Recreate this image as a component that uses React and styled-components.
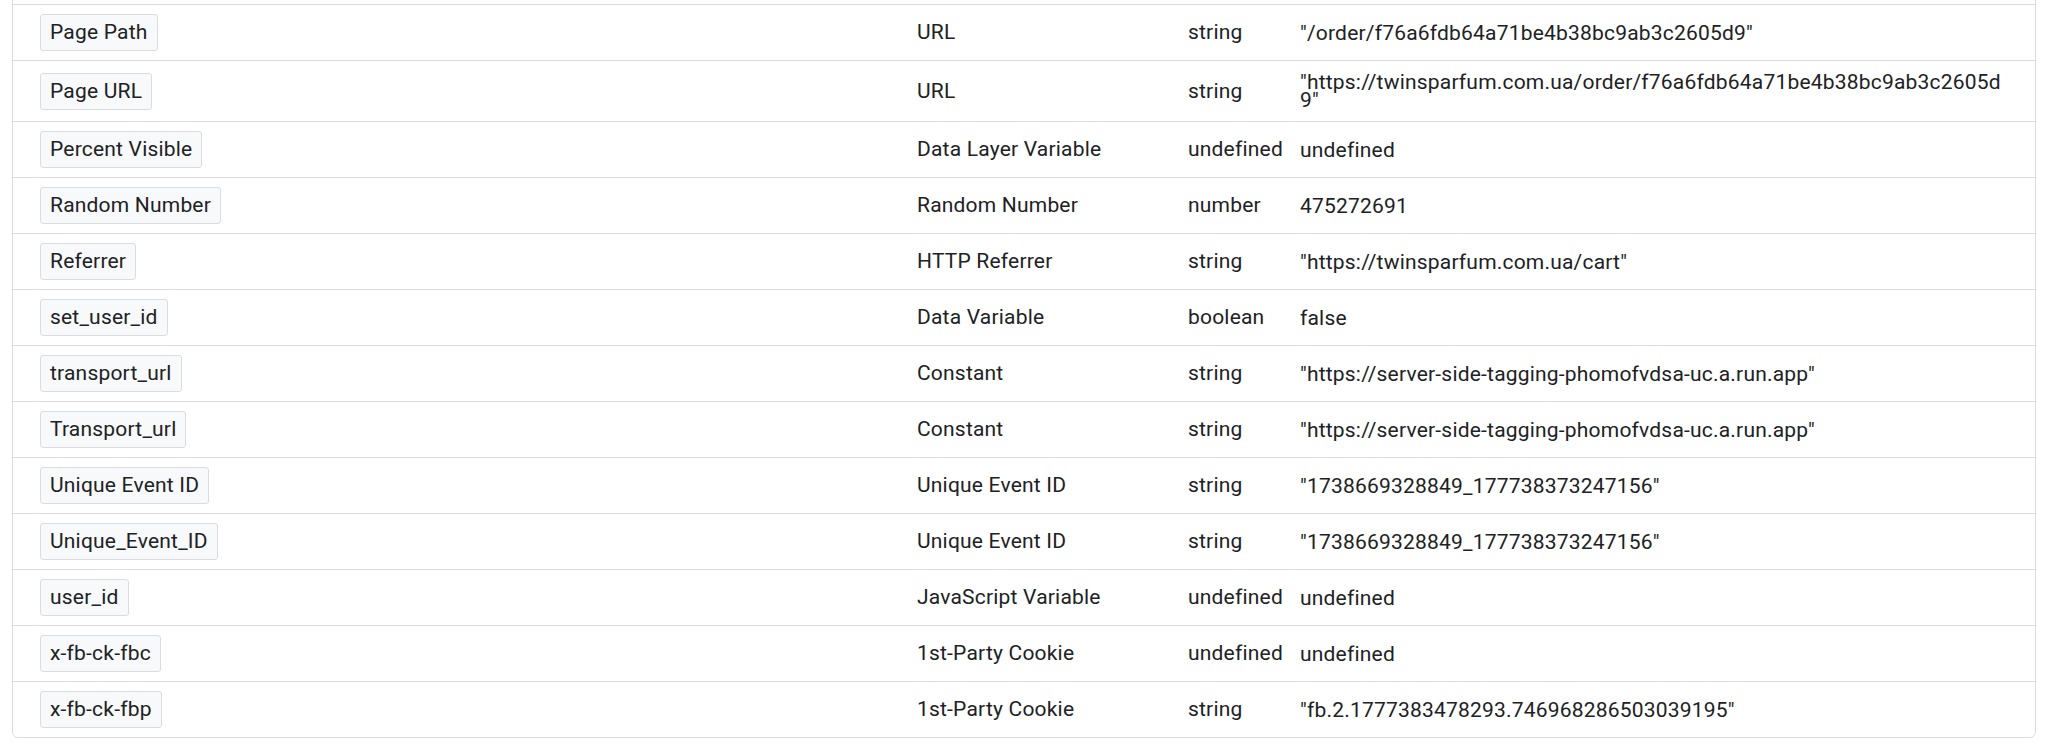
import React from 'react';
import styled, { createGlobalStyle } from 'styled-components';

const GlobalStyle = createGlobalStyle`
    html, body {
        margin: 0;
        padding: 0;
        background: #fff;
    }
    body {
        font-family: Roboto, "Noto Sans", Arial, sans-serif;
        color: #202124;
        letter-spacing: 0.2px;
    }
`;

const Viewport = styled.div`
    height: 756px;
    overflow: hidden;
    padding: 0 12px;
`;

const Panel = styled.div`
    margin-top: -52px;
    border: 1px solid #dadce0;
    border-radius: 6px;
    background: #fff;
`;

const Row = styled.div`
    display: grid;
    grid-template-columns: 892px 271px 112px 1fr;
    align-items: center;
    min-height: 55px;
    border-bottom: 1px solid #dadce0;

    &:last-child {
        border-bottom: none;
    }
`;

const NameCell = styled.div`
    padding: 9px 0 9px 27px;
`;

const Chip = styled.span`
    display: inline-block;
    padding: 5px 9px;
    font-size: 21px;
    line-height: 25px;
    color: #202124;
    background: #f8f9fa;
    border: 1px solid #dadce0;
    border-radius: 3px;
`;

const Cell = styled.div`
    padding: 0 4px 0 12px;
    font-size: 21px;
    line-height: 25px;
    white-space: nowrap;
`;

const ValueCell = styled.div`
    padding: 12px 29px 12px 12px;
    font-size: 21px;
    line-height: 18px;
    word-break: break-all;
`;

// first entry sits above the fold, the list is scrolled down a bit
const rows = [
    ['Page Hostname', 'URL', 'string', '"twinsparfum.com.ua"'],
    ['Page Path', 'URL', 'string', '"/order/f76a6fdb64a71be4b38bc9ab3c2605d9"'],
    ['Page URL', 'URL', 'string', '"https://twinsparfum.com.ua/order/f76a6fdb64a71be4b38bc9ab3c2605d9"'],
    ['Percent Visible', 'Data Layer Variable', 'undefined', 'undefined'],
    ['Random Number', 'Random Number', 'number', '475272691'],
    ['Referrer', 'HTTP Referrer', 'string', '"https://twinsparfum.com.ua/cart"'],
    ['set_user_id', 'Data Variable', 'boolean', 'false'],
    ['transport_url', 'Constant', 'string', '"https://server-side-tagging-phomofvdsa-uc.a.run.app"'],
    ['Transport_url', 'Constant', 'string', '"https://server-side-tagging-phomofvdsa-uc.a.run.app"'],
    ['Unique Event ID', 'Unique Event ID', 'string', '"1738669328849_177738373247156"'],
    ['Unique_Event_ID', 'Unique Event ID', 'string', '"1738669328849_177738373247156"'],
    ['user_id', 'JavaScript Variable', 'undefined', 'undefined'],
    ['x-fb-ck-fbc', '1st-Party Cookie', 'undefined', 'undefined'],
    ['x-fb-ck-fbp', '1st-Party Cookie', 'string', '"fb.2.1777383478293.746968286503039195"'],
];

const App = () => {
    return (
        <>
            <GlobalStyle />
            <Viewport>
                <Panel>
                    {rows.map(([name, varType, valueType, value]) => (
                        <Row key={name}>
                            <NameCell>
                                <Chip>{name}</Chip>
                            </NameCell>
                            <Cell>{varType}</Cell>
                            <Cell>{valueType}</Cell>
                            <ValueCell>{value}</ValueCell>
                        </Row>
                    ))}
                </Panel>
            </Viewport>
        </>
    );
};

export default App;
